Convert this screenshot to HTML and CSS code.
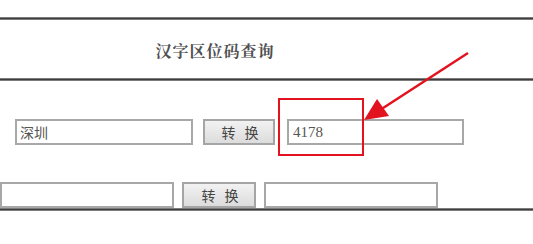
FILE: index.html
```html
<!DOCTYPE html>
<html lang="zh-CN">
<head>
  <meta charset="UTF-8" />
  <title>汉字区位码查询</title>
  <link rel="stylesheet" href="styles.css">
</head>
<body>
  <div class="page">
    <div class="rule top-rule"></div>
    <div class="header">
      <h1 class="title">汉字区位码查询</h1>
    </div>
    <div class="rule"></div>

    <form class="row row-one">
      <input type="text" class="field" value="深圳" />
      <button type="button" class="convert">转 换</button>
      <input type="text" class="field result" value="4178" />
    </form>

    <form class="row row-two">
      <input type="text" class="field field-short" />
      <button type="button" class="convert wide">转 换</button>
      <input type="text" class="field field-short" />
    </form>
    <div class="rule bottom-rule"></div>

    <!-- annotation -->
    <svg class="mark" width="533" height="244" viewBox="0 0 533 244">
      <rect x="279" y="99" width="84" height="56" fill="none" stroke="#e3121f" stroke-width="2" />
      <line x1="468" y1="53" x2="380" y2="110" stroke="#e3121f" stroke-width="2.5" />
      <polygon points="364,120 377,99 389,116" fill="#e3121f" />
    </svg>
  </div>
</body>
</html>
```

FILE: styles.css
```css
* {
  box-sizing: border-box;
  margin: 0;
  padding: 0;
}

body {
  background: #fff;
  font-family: "Noto Sans CJK SC", "DejaVu Sans", sans-serif;
  width: 533px;
  height: 244px;
  overflow: hidden;
}

.page {
  position: relative;
  padding-top: 17px;
  height: 244px;
}

.rule {
  height: 3px;
  background: linear-gradient(#9a9a9a, #3e3e3e, #9a9a9a);
}

.header {
  height: 58px;
  display: flex;
  align-items: center;
}

.title {
  width: 430px;
  text-align: center;
  font-family: "Noto Serif CJK SC", "Noto Sans CJK SC", serif;
  font-size: 16px;
  font-weight: bold;
  color: #505050;
  letter-spacing: 1px;
  padding-top: 2px;
}

.row {
  display: flex;
  align-items: center;
}

.row-one {
  margin-top: 38px;
  padding-left: 15px;
}

.row-two {
  margin-top: 37px;
}

.field {
  height: 26px;
  width: 178px;
  border: 2px solid #a8a8a8;
  background: #fff;
  padding: 0 3px;
  font-family: "Noto Sans CJK SC", sans-serif;
  font-size: 14px;
  color: #555;
  outline: none;
}

.result {
  margin-left: 12px;
  width: 177px;
  font-family: "Liberation Serif", "Noto Sans CJK SC", serif;
  font-size: 15px;
  padding-left: 4px;
}

.field-short {
  width: 174px;
}

.convert {
  height: 26px;
  width: 72px;
  margin-left: 10px;
  border: 2px solid #a5a5a5;
  background: linear-gradient(#f2f2f2, #dcdcdc);
  font-family: "Noto Sans CJK SC", sans-serif;
  font-size: 14px;
  color: #444;
  word-spacing: 6px;
  padding-left: 2px;
}

.wide {
  width: 74px;
  margin-left: 8px;
  margin-right: 8px;
}

.bottom-rule {
  margin-top: 0;
}

.mark {
  position: absolute;
  left: 0;
  top: 0;
}
```
